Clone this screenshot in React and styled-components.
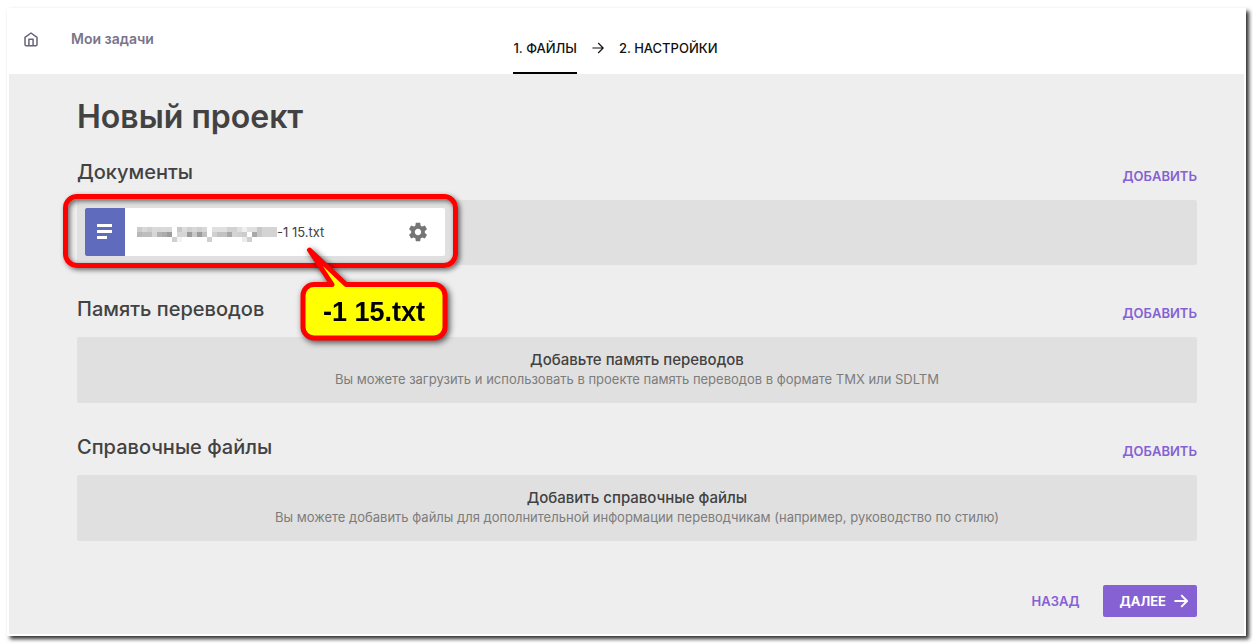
import React from "react";
import styled, { createGlobalStyle } from "styled-components";

const sections = [
  {
    title: "Память переводов",
    heading: "Добавьте память переводов",
    text: "Вы можете загрузить и использовать в проекте память переводов в формате TMX или SDLTM",
  },
  {
    title: "Справочные файлы",
    heading: "Добавить справочные файлы",
    text: "Вы можете добавить файлы для дополнительной информации переводчикам (например, руководство по стилю)",
  },
];

// shades of the hidden part of the file name, one row of squares per line
const mosaic = [
  ["#cccccc", "#d8d8d8", "#d0d0d0", "#dadada", "#d8d8d8", "#dadada", "#d8d8d8", "", "#c8c8c8", "#dcdcdc", "#d0d0d0", "#d8d8d8", "#d0d0d0", "#d8d8d8", "", "#e0e0e0", "#e0e0e0", "#e0e0e0", "#d2d2d2", "#d2d2d2", "#e0e0e0", "#f0f0f0", "#e0e0e0", "#e0e0e0", "#c8c8c8", "#d4d4d4", "#d4d4d4", "#d4d4d4"],
  ["#b8b8b8", "#bebebe", "#bebebe", "#d6d6d6", "#b2b2b2", "#ababab", "#9c9c9c", "", "#d6d6d6", "#d6d6d6", "#9c9c9c", "#c8c8c8", "#9c9c9c", "#c0c0c0", "", "#d0d0d0", "#c2c2c2", "#c2c2c2", "#a8a8a8", "#d4d4d4", "#d0d0d0", "#cccccc", "", "#a8a8a8", "#c8c8c8", "#d4d4d4", "#d4d4d4", "#d4d4d4"],
  ["", "", "", "", "", "", "", "#d0d0d0", "#f4f4f4", "", "", "", "", "", "#d0d0d0", "", "", "", "", "", "", "#ececec", "#d0d0d0", "", "", "", "", ""],
];

export default function App() {
  return (
    <>
      <GlobalStyle />
      <Page>
        <Header>
          <Nav>
            <HomeLink href="#home" aria-label="Home">
              <HomeIcon />
            </HomeLink>
            <NavLink href="#tasks">Мои задачи</NavLink>
          </Nav>
          <Steps>
            <Step href="#files" $active>
              1. ФАЙЛЫ
            </Step>
            <Arrow size={12} />
            <Step href="#settings">2. НАСТРОЙКИ</Step>
          </Steps>
        </Header>
        <Main>
          <Title>Новый проект</Title>
          <Section>
            <SectionTop>
              <Heading>Документы</Heading>
              <TextButton>ДОБАВИТЬ</TextButton>
            </SectionTop>
            <Files>
              <FileCard>
                <FileType>
                  <TextIcon />
                </FileType>
                <FileName>
                  <Mosaic />
                  <span>-1 15.txt</span>
                </FileName>
                <GearButton aria-label="Settings">
                  <GearIcon />
                </GearButton>
                <Highlight />
                <Callout>
                  <Bubble />
                  <CalloutText>-1 15.txt</CalloutText>
                </Callout>
              </FileCard>
            </Files>
          </Section>
          {sections.map((item) => (
            <Section key={item.title}>
              <SectionTop>
                <Heading>{item.title}</Heading>
                <TextButton>ДОБАВИТЬ</TextButton>
              </SectionTop>
              <Drop>
                <DropHeading>{item.heading}</DropHeading>
                <DropText>{item.text}</DropText>
              </Drop>
            </Section>
          ))}
          <Actions>
            <TextButton>НАЗАД</TextButton>
            <NextButton>
              ДАЛЕЕ
              <Arrow size={14} bold />
            </NextButton>
          </Actions>
        </Main>
      </Page>
    </>
  );
}

function HomeIcon() {
  return (
    <svg width="14" height="15" viewBox="0 0 14 15" fill="none" stroke="currentColor" strokeWidth="1.5" strokeLinejoin="round">
      <path d="M1 5.4 7 1l6 4.4v7.1a1.3 1.3 0 0 1-1.3 1.3H2.3A1.3 1.3 0 0 1 1 12.5Z" />
      <path d="M4.9 13.8V7.3h4.2v6.5" />
    </svg>
  );
}

function Arrow({ size, bold }) {
  return (
    <svg width={size} height={size} viewBox="0 0 12 12" fill="none" stroke="currentColor" strokeWidth={bold ? 1.7 : 1.2}>
      <path d="M0.4 6h10.6M6.2 1l5 5-5 5" />
    </svg>
  );
}

function TextIcon() {
  return (
    <svg width="16" height="16" viewBox="0 0 16 16" fill="#fff">
      <path d="M0 0h15v3H0zM0 6h15v3H0zM0 12h10v3H0z" />
    </svg>
  );
}

function GearIcon() {
  return (
    <svg width="22" height="22" viewBox="0 0 24 24" fill="#757575">
      <path d="M19.43 12.98c.04-.32.07-.64.07-.98s-.03-.66-.07-.98l2.11-1.65c.19-.15.24-.42.12-.64l-2-3.46c-.12-.22-.39-.3-.61-.22l-2.49 1c-.52-.4-1.08-.73-1.69-.98l-.38-2.65C14.46 2.18 14.25 2 14 2h-4c-.25 0-.46.18-.49.42l-.38 2.65c-.61.25-1.17.59-1.69.98l-2.49-1c-.23-.09-.49 0-.61.22l-2 3.46c-.13.22-.07.49.12.64l2.11 1.65c-.04.32-.07.65-.07.98s.03.66.07.98l-2.11 1.65c-.19.15-.24.42-.12.64l2 3.46c.12.22.39.3.61.22l2.49-1c.52.4 1.08.73 1.69.98l.38 2.65c.03.24.24.42.49.42h4c.25 0 .46-.18.49-.42l.38-2.65c.61-.25 1.17-.59 1.69-.98l2.49 1c.23.09.49 0 .61-.22l2-3.46c.12-.22.07-.49-.12-.64l-2.11-1.65zM12 15.5c-1.93 0-3.5-1.57-3.5-3.5s1.57-3.5 3.5-3.5 3.5 1.57 3.5 3.5-1.57 3.5-3.5 3.5z" />
    </svg>
  );
}

function Mosaic() {
  return (
    <svg width="140" height="20" viewBox="0 -5 140 20" shapeRendering="crispEdges">
      {mosaic.map((row, y) =>
        row.map((fill, x) =>
          fill ? <rect key={x + "-" + y} x={x * 5} y={y * 5} width="5" height="5" fill={fill} /> : null
        )
      )}
    </svg>
  );
}

function Bubble() {
  return (
    <svg width="148" height="94" viewBox="0 0 148 94">
      <path
        d="M9.5 3 46 37.5H134a11 11 0 0 1 11 11V80a11 11 0 0 1-11 11H14A11 11 0 0 1 3 80V48.5A11 11 0 0 1 14 37.5H32Z"
        fill="#ffff00"
        stroke="#ff0000"
        strokeWidth="5"
        strokeLinejoin="round"
      />
    </svg>
  );
}

const GlobalStyle = createGlobalStyle`
  * {
    box-sizing: border-box;
  }
  body {
    margin: 0;
    background: #fff;
    font-family: Inter, Roboto, sans-serif;
  }
`;

const Page = styled.div`
  margin: 8px 7px 7px;
  padding: 0 2px 2px;
  background: #fff;
  box-shadow: 3px 3px 4px 0 #000000d0;
`;
const Header = styled.header`
  display: grid;
  grid-template-columns: 1fr auto 1fr;
  height: 66px;
  padding-right: 22px;
`;
const Nav = styled.nav`
  display: flex;
  align-items: center;
  gap: 33px;
  height: 62px;
  padding-left: 15px;
  color: #7a748c;
`;
const HomeLink = styled.a`
  display: flex;
  color: #68637a;
`;
const NavLink = styled.a`
  color: inherit;
  font-size: 14px;
  font-weight: 600;
  line-height: 18px;
  text-decoration: none;
`;
const Steps = styled.div`
  display: flex;
  align-items: center;
  gap: 15px;
  padding-top: 14px;
  color: #111;
`;
const Step = styled.a`
  display: flex;
  align-items: center;
  align-self: stretch;
  border-top: 2px solid transparent;
  border-bottom: 2px solid ${(props) => (props.$active ? "#000" : "transparent")};
  color: #111;
  font-size: 13px;
  font-weight: 500;
  text-decoration: none;
`;
const Main = styled.main`
  padding: 22px 47px 17px 68px;
  background: #eeeeee;
`;
const Title = styled.h1`
  margin: 0 0 16px;
  color: #424242;
  font-size: 32px;
  font-weight: 600;
  line-height: 42px;
`;
const Section = styled.section`
  margin-bottom: 26px;
`;
const SectionTop = styled.div`
  display: flex;
  align-items: center;
  justify-content: space-between;
  height: 46px;
  padding-bottom: 10px;
`;
const Heading = styled.h2`
  margin: 0;
  color: #424242;
  font-size: 20px;
  font-weight: 500;
  line-height: 24px;
`;
const TextButton = styled.button`
  padding: 0;
  border: 0;
  background: none;
  color: #8561d3;
  font: 600 13px Inter, sans-serif;

  ${SectionTop} & {
    padding-top: 8px;
  }
`;
const Files = styled.div`
  padding: 8px 8px 9px;
  border-radius: 2px;
  background: #e0e0e0;
`;
const FileCard = styled.div`
  position: relative;
  display: flex;
  width: 360px;
  height: 48px;
  border-radius: 2px;
  background: #fff;
`;
const FileType = styled.div`
  display: flex;
  align-items: center;
  justify-content: center;
  width: 40px;
  border-radius: 2px 0 0 2px;
  background: #5f6bbc;
`;
const FileName = styled.div`
  display: flex;
  flex: 1;
  align-items: center;
  padding-left: 12px;
  color: #424242;
  font-size: 13px;
`;
const GearButton = styled.button`
  display: flex;
  align-items: center;
  margin-right: 16px;
  padding: 0;
  border: 0;
  background: none;
`;
const Highlight = styled.div`
  position: absolute;
  inset: -14px -13px -12px -22px;
  border: 5px solid #ff0000;
  border-radius: 14px;
  box-shadow: 2px 2px 5px #00000090, inset 2px 2px 5px #00000090;
`;
const Callout = styled.div`
  position: absolute;
  top: 39px;
  left: 215px;
  display: flex;
  filter: drop-shadow(2px 2px 3px #000000b0);
`;
const CalloutText = styled.strong`
  position: absolute;
  inset: 36px 0 0;
  display: flex;
  align-items: center;
  justify-content: center;
  color: #000;
  font: bold 27px "Liberation Sans", Arial, sans-serif;
`;
const Drop = styled.div`
  padding: 13px 16px 15px;
  border-radius: 2px;
  background: #e0e0e0;
  text-align: center;
`;
const DropHeading = styled.div`
  color: #424242;
  font-size: 15px;
  font-weight: 500;
  line-height: 20px;
`;
const DropText = styled.div`
  color: #7c7c7c;
  font-size: 13px;
  line-height: 18px;
`;
const Actions = styled.div`
  display: flex;
  align-items: center;
  justify-content: flex-end;
  gap: 24px;
  padding-top: 18px;
`;
const NextButton = styled.button`
  display: flex;
  align-items: center;
  gap: 8px;
  height: 32px;
  padding: 0 9px 0 16px;
  border: 0;
  border-radius: 2px;
  background: #8561d3;
  color: #fff;
  font: 700 13px Inter, sans-serif;
`;
